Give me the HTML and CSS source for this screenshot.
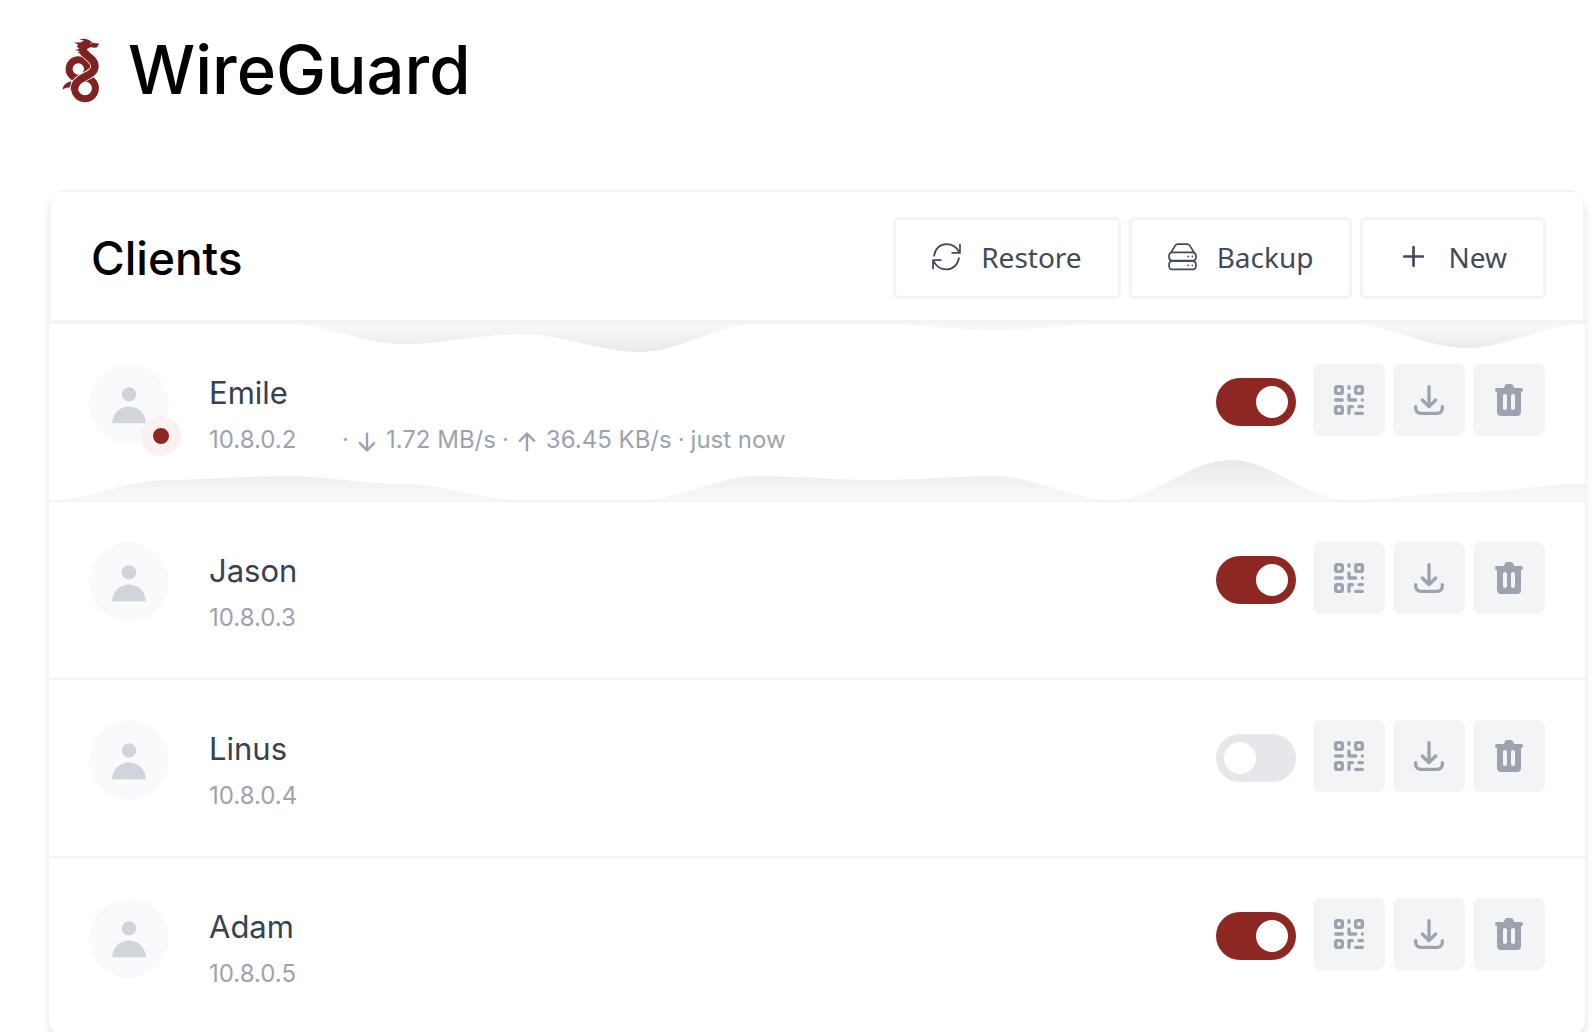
FILE: index.html
```html
<!DOCTYPE html>
<html lang="en">
<head>
  <meta charset="UTF-8">
  <meta name="viewport" content="width=device-width, initial-scale=1.0">
  <title>WireGuard</title>
  <link rel="stylesheet" href="styles.css">
</head>
<body>
<svg class="sprite" aria-hidden="true">
  <symbol id="user" viewBox="0 0 20 20"><path d="M10 9a3 3 0 100-6 3 3 0 000 6zm-7 9a7 7 0 1114 0H3z"/></symbol>
  <symbol id="qr" viewBox="0 0 24 24"><path d="M12 4v1m6 11h2m-6 0h-2v4m0-11v3m0 0h.01M12 12h4.01M16 20h4M4 12h4m12 0h.01M5 8h2a1 1 0 001-1V5a1 1 0 00-1-1H5a1 1 0 00-1 1v2a1 1 0 001 1zm12 0h2a1 1 0 001-1V5a1 1 0 00-1-1h-2a1 1 0 00-1 1v2a1 1 0 001 1zM5 20h2a1 1 0 001-1v-2a1 1 0 00-1-1H5a1 1 0 00-1 1v2a1 1 0 001 1z" fill="none" stroke="currentColor" stroke-width="2" stroke-linecap="round" stroke-linejoin="round"/></symbol>
  <symbol id="download" viewBox="0 0 24 24"><path d="M4 16v1a3 3 0 003 3h10a3 3 0 003-3v-1m-4-4l-4 4m0 0l-4-4m4 4V4" fill="none" stroke="currentColor" stroke-width="2" stroke-linecap="round" stroke-linejoin="round"/></symbol>
  <symbol id="trash" viewBox="0 0 20 20"><path fill-rule="evenodd" d="M9 2a1 1 0 00-.894.553L7.382 4H4a1 1 0 000 2v10a2 2 0 002 2h8a2 2 0 002-2V6a1 1 0 100-2h-3.382l-.724-1.447A1 1 0 0011 2H9zM7 8a1 1 0 012 0v6a1 1 0 11-2 0V8zm5-1a1 1 0 00-1 1v6a1 1 0 102 0V8a1 1 0 00-1-1z"/></symbol>
</svg>

<header class="top">
  <svg class="logo" viewBox="0 0 38 65" aria-hidden="true">
    <!-- coils and tail -->
    <circle class="coil" cx="16.300" cy="31" r="9.200"/>
    <circle class="coil" cx="23" cy="50.300" r="10.400"/>
    <path d="M9.500 43.500C9 46 9.500 48 10 49.500C7 49 4 50 .5 51.500C1 47 5 44 9.500 43.500Z"/>
    <!-- neck, crossing over the coils -->
    <path class="neck-gap" d="M20 12C24 19 32.500 20 32.800 28C33 36 24 37 17.500 42C13.500 45 12.400 49 12.500 52"/>
    <path class="neck" d="M20 12C24 19 32.500 20 32.800 28C33 36 24 37 17.500 42C13.500 45 12.400 49 12.500 52"/>
    <!-- head -->
    <path d="M17 1.300C21 .2 24 .8 27.500 2.200L31 5L36.500 5.600L37 7L35.500 7.600L36 9L33 9.800L28.500 9.200L25 11C24.500 13 25.500 14.500 27 15.500L20 17C18.500 15.500 17 14.800 15 14.500L18.500 13.300L13.500 12.200L17.500 10.500L15 9L16 6.500L12 4.500L18.500 4.600L22 2.600Z"/>
    <circle class="eye" cx="29" cy="5.300" r=".6"/>
  </svg>
  <h1>WireGuard</h1>
</header>

<main class="card">
  <div class="card-header">
    <h2>Clients</h2>
    <div class="toolbar">
      <button type="button">
        <svg viewBox="0 0 28 28" aria-hidden="true"><path d="M2 13.500C3 6 8 2 14 2C19.500 2 24 5 26.500 10M27 2.500V10.500H19.500M26 15.500C25 22 20 26.500 14 26.500C8.500 26.500 4 23.500 1.500 18.500M1 25.500V17.500H8.500"/></svg>
        Restore
      </button>
      <button type="button">
        <svg viewBox="0 0 28 28" aria-hidden="true"><path d="M2.500 10.500L7 3.500Q8 2 9.500 2H18.500Q20 2 21 3.500L25.500 10.500M4 10H24Q27 10 27 14T24 18H4Q1 18 1 14T4 10ZM4 18.500H24Q27 18.500 27 22.500T24 26.500H4Q1 26.500 1 22.500T4 18.500ZM19.500 14h.01M23.500 14h.01M19.500 22.500h.01M23.500 22.500h.01"/></svg>
        Backup
      </button>
      <button type="button">
        <svg class="plus" viewBox="0 0 28 28" aria-hidden="true"><path d="M14 5v18M5 14h18"/></svg>
        New
      </button>
    </div>
  </div>

  <section class="client">
    <svg class="chart chart-rx" viewBox="0 0 1300 40" preserveAspectRatio="none" aria-hidden="true">
      <defs><linearGradient id="rx" x1="0" y1="0" x2="0" y2="1"><stop offset="0" stop-color="#f9f9f9"/><stop offset="1" stop-color="#e9e9e9"/></linearGradient></defs>
      <path fill="url(#rx)" d="M0 0H200C235 0 265 20 300 20S365 10 400 10 465 28 500 28 565 0 600 0H700C735 0 765 6 800 6S865 0 900 0H1100C1135 0 1165 24 1200 24S1265 0 1300 0Z"/>
    </svg>
    <svg class="chart chart-tx" viewBox="0 0 1300 40" preserveAspectRatio="none" aria-hidden="true">
      <defs><linearGradient id="tx" x1="0" y1="0" x2="0" y2="1"><stop offset="0" stop-color="#e9e9e9"/><stop offset="1" stop-color="#f9f9f9"/></linearGradient></defs>
      <path fill="url(#tx)" d="M0 40C35 40 65 20 100 20S165 16 200 16 265 24 300 24 365 40 400 40H500C535 40 565 16 600 16S665 20 700 20 765 16 800 16 865 40 900 40 965 0 1000 0 1065 40 1100 40 1165 32 1200 32 1265 24 1300 24V40Z"/>
    </svg>
    <div class="avatar"><svg aria-hidden="true"><use href="#user"/></svg><span class="online"></span></div>
    <div class="info">
      <div class="name">Emile</div>
      <div class="meta">
        <span class="address">10.8.0.2</span>
        <span>·</span>
        <span class="rate"><svg viewBox="0 0 20 20" aria-hidden="true"><path d="M16.707 10.293a1 1 0 010 1.414l-6 6a1 1 0 01-1.414 0l-6-6a1 1 0 111.414-1.414L9 14.586V3a1 1 0 012 0v11.586l4.293-4.293a1 1 0 011.414 0z"/></svg>1.72 MB/s</span>
        <span>·</span>
        <span class="rate"><svg viewBox="0 0 20 20" aria-hidden="true"><path d="M3.293 9.707a1 1 0 010-1.414l6-6a1 1 0 011.414 0l6 6a1 1 0 01-1.414 1.414L11 5.414V17a1 1 0 11-2 0V5.414L4.707 9.707a1 1 0 01-1.414 0z"/></svg>36.45 KB/s</span>
        <span>·</span>
        <span>just now</span>
      </div>
    </div>
    <div class="actions">
      <input class="switch" type="checkbox" aria-label="Enable Emile" checked>
      <button type="button" aria-label="Show QR code"><svg><use href="#qr"/></svg></button>
      <a href="#" aria-label="Download configuration"><svg><use href="#download"/></svg></a>
      <button type="button" aria-label="Delete client"><svg><use href="#trash"/></svg></button>
    </div>
  </section>

  <section class="client">
    <div class="avatar"><svg aria-hidden="true"><use href="#user"/></svg></div>
    <div class="info">
      <div class="name">Jason</div>
      <div class="meta"><span class="address">10.8.0.3</span></div>
    </div>
    <div class="actions">
      <input class="switch" type="checkbox" aria-label="Enable Jason" checked>
      <button type="button" aria-label="Show QR code"><svg><use href="#qr"/></svg></button>
      <a href="#" aria-label="Download configuration"><svg><use href="#download"/></svg></a>
      <button type="button" aria-label="Delete client"><svg><use href="#trash"/></svg></button>
    </div>
  </section>

  <section class="client">
    <div class="avatar"><svg aria-hidden="true"><use href="#user"/></svg></div>
    <div class="info">
      <div class="name">Linus</div>
      <div class="meta"><span class="address">10.8.0.4</span></div>
    </div>
    <div class="actions">
      <input class="switch" type="checkbox" aria-label="Enable Linus">
      <button type="button" aria-label="Show QR code"><svg><use href="#qr"/></svg></button>
      <a href="#" aria-label="Download configuration"><svg><use href="#download"/></svg></a>
      <button type="button" aria-label="Delete client"><svg><use href="#trash"/></svg></button>
    </div>
  </section>

  <section class="client">
    <div class="avatar"><svg aria-hidden="true"><use href="#user"/></svg></div>
    <div class="info">
      <div class="name">Adam</div>
      <div class="meta"><span class="address">10.8.0.5</span></div>
    </div>
    <div class="actions">
      <input class="switch" type="checkbox" aria-label="Enable Adam" checked>
      <button type="button" aria-label="Show QR code"><svg><use href="#qr"/></svg></button>
      <a href="#" aria-label="Download configuration"><svg><use href="#download"/></svg></a>
      <button type="button" aria-label="Delete client"><svg><use href="#trash"/></svg></button>
    </div>
  </section>
</main>
</body>
</html>
```
FILE: styles.css
```css
* { box-sizing: border-box; }
html { scrollbar-width: none; }
body {
  margin: 0;
  padding: 30px 7px 30px 49px;
  background-color: #ffffff;
  font-family: Inter, "Liberation Sans", sans-serif;
}
svg { display: block; fill: currentColor; }
.sprite { position: absolute; width: 0; height: 0; }

.top {
  display: flex;
  align-items: center;
  gap: 28px;
  height: 80px;
  margin-bottom: 80px;
  padding-left: 13px;
}
.logo {
  width: 38px;
  height: 65px;
  color: #7f2222;
}
.coil, .neck, .neck-gap { fill: none; stroke: currentColor; }
.coil { stroke-width: 7; }
.neck { stroke-width: 7.8; }
.neck-gap { stroke: #ffffff; stroke-width: 9.4; }
.eye { fill: #ffffff; }
h1, h2 {
  margin: 0;
  font-weight: 500;
  color: #000000;
}
h1 { font-size: 67px; line-height: 84px; }
h2 { font-size: 46px; line-height: 60px; }

.card {
  border-radius: 16px;
  background-color: #ffffff;
  box-shadow: 0 8px 12px -2px rgba(0, 0, 0, 0.1), 0 4px 8px -2px rgba(0, 0, 0, 0.06);
  overflow: hidden;
}
.card-header {
  display: flex;
  justify-content: space-between;
  align-items: center;
  height: 134px;
  padding: 3px 37px 0 40px;
  border: 2px solid #f3f4f6;
  border-bottom-width: 4px;
}
.toolbar {
  display: flex;
  gap: 8px;
}
.toolbar button {
  display: flex;
  align-items: center;
  gap: 20px;
  height: 82px;
  padding: 0 36px 2px;
  border: 3px solid #f3f4f6;
  border-radius: 6px;
  background-color: #ffffff;
  color: #414b5a;
  font-family: "Noto Sans", sans-serif;
  font-size: 28px;
  cursor: pointer;
}
.toolbar svg {
  width: 29px;
  height: 29px;
  fill: none;
  stroke: currentColor;
  stroke-width: 1.7;
  stroke-linecap: round;
  stroke-linejoin: round;
}
.toolbar .plus { stroke-width: 2.6; }

.client {
  position: relative;
  display: flex;
  gap: 40px;
  height: 178px;
  padding: 40px;
  border-bottom: 2px solid #f3f4f6;
}
.client:last-child { border-bottom: none; }
.chart {
  position: absolute;
  left: 0;
  width: 100%;
  height: 40px;
}
.chart-rx { top: 0; }
.chart-tx { bottom: 0; }

.avatar {
  position: relative;
  width: 80px;
  height: 80px;
  padding: 16px;
  border-radius: 50%;
  background-color: #f9fafb;
  color: #d1d5db;
}
.avatar svg { width: 48px; height: 48px; }
.online {
  position: absolute;
  right: -12px;
  bottom: -12px;
  width: 40px;
  height: 40px;
  border: 12px solid #fcf1f1;
  border-radius: 50%;
  background-color: #8c2722;
}

.info { flex: 1; padding-top: 8px; }
.name {
  font-size: 31px;
  line-height: 42px;
  color: #374151;
}
.meta {
  display: flex;
  align-items: center;
  gap: 6px;
  padding-top: 8px;
  font-size: 24px;
  line-height: 36px;
  color: #9ca3af;
}
.address { min-width: 127px; }
.rate {
  display: flex;
  align-items: center;
  gap: 7px;
}
.rate svg {
  width: 24px;
  height: 24px;
  margin-top: 4px;
}

.actions {
  display: flex;
  align-items: center;
  gap: 8px;
  height: 72px;
}
.actions button,
.actions a {
  display: flex;
  justify-content: center;
  align-items: center;
  width: 72px;
  height: 72px;
  padding: 0;
  border: none;
  border-radius: 8px;
  background-color: #f3f4f6;
  color: #9ca3af;
  cursor: pointer;
}
.actions svg { width: 40px; height: 40px; }
.switch {
  appearance: none;
  width: 80px;
  height: 48px;
  margin: 4px 9px 0 0;
  padding: 8px;
  border-radius: 24px;
  background-color: #e5e7eb;
  cursor: pointer;
}
.switch::before {
  content: "";
  display: block;
  width: 32px;
  height: 32px;
  border-radius: 50%;
  background-color: #ffffff;
}
.switch:checked { background-color: #8c2722; }
.switch:checked::before { margin-left: auto; }
```
